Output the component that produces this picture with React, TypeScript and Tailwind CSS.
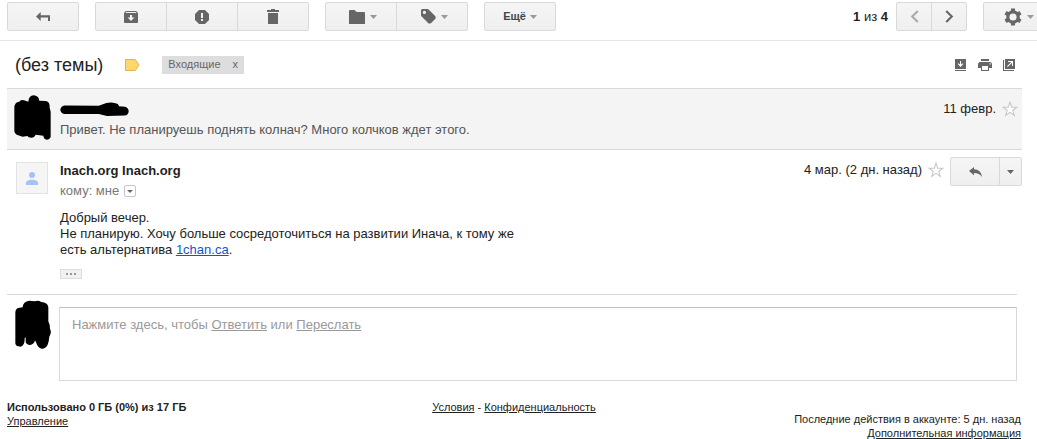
import type { ReactNode } from 'react';
import clsx from 'clsx';

type ToolButtonProps = {
  label: string;
  className?: string;
  children: ReactNode;
};

function ToolButton({ label, className, children }: ToolButtonProps) {
  return (
    <button
      type="button"
      aria-label={label}
      className={clsx(
        'flex h-[29px] shrink-0 items-center justify-center border border-[#d9d9d9] bg-gradient-to-b from-[#f5f5f5] to-[#efefef] text-[#666] first:rounded-l-xs last:rounded-r-xs not-first:-ml-px',
        className ?? 'w-[72px]'
      )}
    >
      {children}
    </button>
  );
}

function Caret({ className }: { className?: string }) {
  return (
    <svg width="7" height="4" viewBox="0 0 7 4" className={className ?? 'text-[#999]'} fill="currentColor">
      <path d="M0 0h7L3.5 4z" />
    </svg>
  );
}

function Chevron({ flip }: { flip?: boolean }) {
  return (
    <svg width="9" height="13" viewBox="0 0 9 13" fill="none" stroke="currentColor" strokeWidth="2.1">
      <path d={flip ? 'M1.2 1l5.6 5.5L1.2 12' : 'M7.8 1L2.2 6.5 7.8 12'} />
    </svg>
  );
}

function StarButton() {
  return (
    <button type="button" aria-label="Пометить">
      <svg width="16" height="16" viewBox="0 0 16 16" fill="#fff" stroke="#c8c8c8" strokeWidth="1.1">
        <path d="M8 1.2l1.7 5h5.1l-4 3.1 1.5 5L8 11.3l-4.300 3 1.500-5-4-3.100h5.100z" />
      </svg>
    </button>
  );
}

function Toolbar() {
  return (
    <div className="flex h-[41px] items-start gap-4 border-b border-[#e5e5e5] pt-[2px] pl-[7px]">
      <div className="flex">
        <ToolButton label="Назад">
          <svg width="14" height="9" viewBox="0 0 14 9" fill="currentColor">
            <path d="M0 4.5L4.7 0v3.3H14V9h-2V5.5H4.7V9z" />
          </svg>
        </ToolButton>
      </div>
      <div className="flex">
        <ToolButton label="Архивировать">
          <svg width="14" height="12" viewBox="0 0 14 12" fill="currentColor">
            <path
              fillRule="evenodd"
              d="M1.6 0h10.8L14 2v9a1 1 0 0 1-1 1H1a1 1 0 0 1-1-1V2zM2 1l-.6.9h11.2L12 1zM6 4v2.600H3.600L7 10l3.400-3.400H8V4z"
            />
          </svg>
        </ToolButton>
        <ToolButton label="В спам!">
          <svg width="14" height="14" viewBox="0 0 14 14" fill="currentColor">
            <path fillRule="evenodd" d="M4 0h6l4 4v6l-4 4H4l-4-4V4zM6 3v5h2V3zM6 9v2h2V9z" />
          </svg>
        </ToolButton>
        <ToolButton label="Удалить">
          <svg width="12" height="15" viewBox="0 0 12 15" fill="currentColor">
            <path d="M0 1h4V0h4v1h4v2H0zM1 4h10v11H1z" />
          </svg>
        </ToolButton>
      </div>
      <div className="flex">
        <ToolButton label="Переместить в" className="w-[72px] gap-[5px] pl-1">
          <svg width="16" height="14" viewBox="0 0 16 14" fill="currentColor">
            <path d="M0 1a1 1 0 0 1 1-1h4.600l2 2H15a1 1 0 0 1 1 1v11H0z" />
          </svg>
          <Caret />
        </ToolButton>
        <ToolButton label="Ярлыки" className="w-[72px] gap-[5px] pl-1">
          <svg width="15" height="15" viewBox="0 0 15 15" fill="currentColor">
            <path
              fillRule="evenodd"
              d="M1 0h5.400l1.200.6 7 6.900v2l-5 5h-2L.6 7.500 0 6.400V1zM3.400 1.800a1.600 1.600 0 1 0 0 3.200 1.600 1.600 0 0 0 0-3.200z"
            />
          </svg>
          <Caret />
        </ToolButton>
      </div>
      <div className="flex">
        <ToolButton label="Ещё" className="w-[72px] gap-1">
          <span className="text-[11px] font-bold text-[#444]">Ещё</span>
          <Caret />
        </ToolButton>
      </div>

      <div className="ml-auto flex items-center gap-2">
        <span className="text-[13px]">
          <b>1</b> из <b>4</b>
        </span>
        <div className="flex">
          <ToolButton label="Предыдущее" className="w-9 text-[#aaa]!">
            <Chevron />
          </ToolButton>
          <ToolButton label="Следующее" className="w-9">
            <Chevron flip />
          </ToolButton>
        </div>
      </div>
      {/* the settings button runs off the right edge of the window */}
      <div className="-mr-[18px] flex">
        <ToolButton label="Настройки" className="w-[72px] gap-[5px]">
          <svg width="18" height="18" viewBox="0 0 18 18" fill="none" stroke="currentColor">
            <circle cx="9" cy="9" r="5.2" strokeWidth="3.2" />
            <path
              d="M9 .4v3M9 14.600v3M1.500 4.700l2.600 1.500M13.900 11.800l2.600 1.500M1.500 13.300l2.600-1.500M13.900 6.200l2.600-1.500"
              strokeWidth="4"
            />
          </svg>
          <Caret />
        </ToolButton>
      </div>
    </div>
  );
}

function SubjectBar() {
  return (
    <div className="flex h-[47px] items-center pr-[22px] pl-[15px]">
      <h1 className="text-[18px] leading-6">(без темы)</h1>
      <svg width="15" height="12" viewBox="0 0 15 12" className="ml-[22px]">
        <path d="M.5.5h9.700l3.800 5.500-3.800 5.500H.5z" fill="#ffd76e" stroke="#e0b252" />
      </svg>
      <div className="ml-[22px] flex h-[18px] items-center gap-3 bg-[#ddd] px-[6px] text-[11px] text-[#666]">
        <span>Входящие</span>
        <button type="button" aria-label="Удалить ярлык">
          x
        </button>
      </div>
      <div className="ml-auto flex items-center gap-[11px] text-[#666]">
        <button type="button" aria-label="Скачать все">
          <svg width="12" height="12" viewBox="0 0 12 12" fill="currentColor">
            <path
              fillRule="evenodd"
              d="M0 0h11v10H0zM5 2v3.600L3.500 4.300l-.8.8 2.800 2.800 2.800-2.800-.8-.8L6 5.600V2zM0 11h11v1H0z"
            />
          </svg>
        </button>
        <button type="button" aria-label="Печать">
          <svg width="14" height="12" viewBox="0 0 14 12" fill="currentColor">
            <path
              fillRule="evenodd"
              d="M3 0h8v2H3zM1.500 3h11L14 4.500V9h-3v3H3V9H0V4.500zM4 7v4h6V7zM11.500 4.300v1.200h1.200V4.300z"
            />
          </svg>
        </button>
        <button type="button" aria-label="В новом окне">
          <svg width="12" height="12" viewBox="0 0 12 12" fill="currentColor">
            <path fillRule="evenodd" d="M2 0h10v10H2zM5 2v1h3.200L4 7.200l.8.8L9 3.800V7h1V2zM0 1h1v10h10v1H0z" />
          </svg>
        </button>
      </div>
    </div>
  );
}

function CollapsedMessage() {
  return (
    <article className="mr-[15px] ml-[7px] flex h-[62px] border-y border-[#d8d8d8] bg-[#f4f4f4]">
      <div className="w-[53px] shrink-0 pt-[6px] pl-[7px]">
        <svg width="37" height="45" viewBox="42 30 111 135">
          <path d="M43 70Q43 50 58 50Q62 42 72 46L85 50Q86 32 101 31Q116 32 118 47L138 48Q150 50 149 68L152 80V155Q150 163 140 164Q131 162 130 152L107 149Q103 158 94 158Q85 158 82 153L68 155L50 149Q43 145 43 138Z" />
        </svg>
      </div>
      <div className="min-w-0 flex-1 pt-[13px] text-[13px] leading-4">
        <svg width="69" height="14" viewBox="177 51 210 42">
          <path d="M191 61L295 62L318 54Q338 49 353 57L357 64L375 65Q386 68 386 79Q385 91 374 92L320 93L295 87L190 87Q179 84 178 74Q179 63 191 61Z" />
        </svg>
        <p className="mt-[6px] text-[#555]">Привет. Не планируешь поднять колнач? Много колчков ждет этого.</p>
      </div>
      <div className="flex items-center gap-[6px] self-start pt-3 pr-1">
        <time className="text-[13px] leading-4">11 февр.</time>
        <StarButton />
      </div>
    </article>
  );
}

function OpenMessage() {
  return (
    <article className="mr-5 ml-[7px] flex h-[145px] border-b border-[#d8d8d8]">
      <div className="w-[53px] shrink-0 pt-3 pl-[9px]">
        <div className="flex size-8 items-center justify-center border border-[#e2e2e2] bg-[#f5f5f5]">
          <svg width="12" height="13" viewBox="0 0 12 13" fill="#a4c2f4">
            <circle cx="6" cy="3" r="3" />
            <path d="M0 13v-2c0-2 3-3.200 6-3.200s6 1.200 6 3.200v2z" />
          </svg>
        </div>
      </div>
      <div className="min-w-0 flex-1 pt-[13px] text-[13px] leading-4">
        <h2 className="font-bold">Inach.org Inach.org</h2>
        <div className="mt-1 flex items-center gap-[5px] text-[#777]">
          кому: мне
          <button
            type="button"
            aria-label="Показать подробности"
            className="flex size-3 items-center justify-center rounded-xs border border-[#c6c6c6]"
          >
            <svg width="6" height="3" viewBox="0 0 6 3" fill="#666">
              <path d="M0 0h6L3 3z" />
            </svg>
          </button>
        </div>
        <p className="mt-[11px] whitespace-nowrap">
          Добрый вечер.
          <br />
          Не планирую. Хочу больше сосредоточиться на развитии Инача, к тому же
          <br />
          есть альтернатива{' '}
          <a href="#" className="text-[#15c] underline">
            1chan.ca
          </a>
          .
        </p>
        <button
          type="button"
          aria-label="Показать скрытый текст"
          className="mt-[11px] flex h-[10px] w-[22px] items-center justify-center gap-[2px] border border-[#ddd] bg-[#f1f1f1]"
        >
          <span className="size-[2px] bg-[#999]" />
          <span className="size-[2px] bg-[#999]" />
          <span className="size-[2px] bg-[#999]" />
        </button>
      </div>
      <div className="-mr-[5px] flex shrink-0 items-start gap-[6px] pt-[7px]">
        <div className="flex items-center gap-[6px] pt-[5px]">
          <time className="text-[13px] leading-4">4 мар. (2 дн. назад)</time>
          <StarButton />
        </div>
        <div className="flex">
          <ToolButton label="Ответить" className="w-[50px]">
            <svg width="13" height="10" viewBox="0 0 13 10" fill="currentColor">
              <path d="M0 4L5 0v2.300c4.500.2 7.300 2.700 8 7.700-1.800-2.600-4.200-3.900-8-3.900V8.300z" />
            </svg>
          </ToolButton>
          <ToolButton label="Ещё" className="w-[23px]">
            <Caret className="text-[#666]" />
          </ToolButton>
        </div>
      </div>
    </article>
  );
}

function ReplyBox() {
  return (
    <div className="mr-5 ml-[7px] flex">
      <div className="w-[52px] shrink-0 pt-[5px] pl-2">
        <svg width="36" height="49" viewBox="45 44 108 147">
          <path d="M46 82Q46 68 58 67L68 66Q69 48 88 46L104 48Q114 43 124 50Q143 51 145 66V108Q150 118 150 130Q156 142 148 154Q147 168 143 178Q136 191 125 190Q113 187 109 173L105 165Q102 178 90 179Q79 178 77 170V156L74 158Q75 182 61 184Q47 184 46 174Z" />
        </svg>
      </div>
      <div className="mt-3 h-[74px] flex-1 border border-t-[#c0c0c0] border-[#d9d9d9] px-3 pt-[9px] text-[13px] leading-4 text-[#999]">
        Нажмите здесь, чтобы{' '}
        <a href="#" className="underline">
          Ответить
        </a>{' '}
        или{' '}
        <a href="#" className="underline">
          Переслать
        </a>
      </div>
    </div>
  );
}

function Footer() {
  return (
    <footer className="mt-[19px] mr-4 ml-[7px] grid grid-cols-3 text-[11px] leading-[14px]">
      <div>
        <b>Использовано 0 ГБ (0%) из 17 ГБ</b>
        <br />
        <a href="#" className="underline">
          Управление
        </a>
      </div>
      <div className="text-center">
        <a href="#" className="underline">
          Условия
        </a>
        {' - '}
        <a href="#" className="underline">
          Конфиденциальность
        </a>
      </div>
      <div className="pt-3 text-right">
        Последние действия в аккаунте: 5 дн. назад
        <br />
        <a href="#" className="underline">
          Дополнительная информация
        </a>
      </div>
    </footer>
  );
}

export default function App() {
  return (
    <div className="overflow-hidden bg-white font-['Liberation_Sans',Arial,sans-serif] text-[#222]">
      <Toolbar />
      <main>
        <SubjectBar />
        <CollapsedMessage />
        <OpenMessage />
        <ReplyBox />
      </main>
      <Footer />
    </div>
  );
}
